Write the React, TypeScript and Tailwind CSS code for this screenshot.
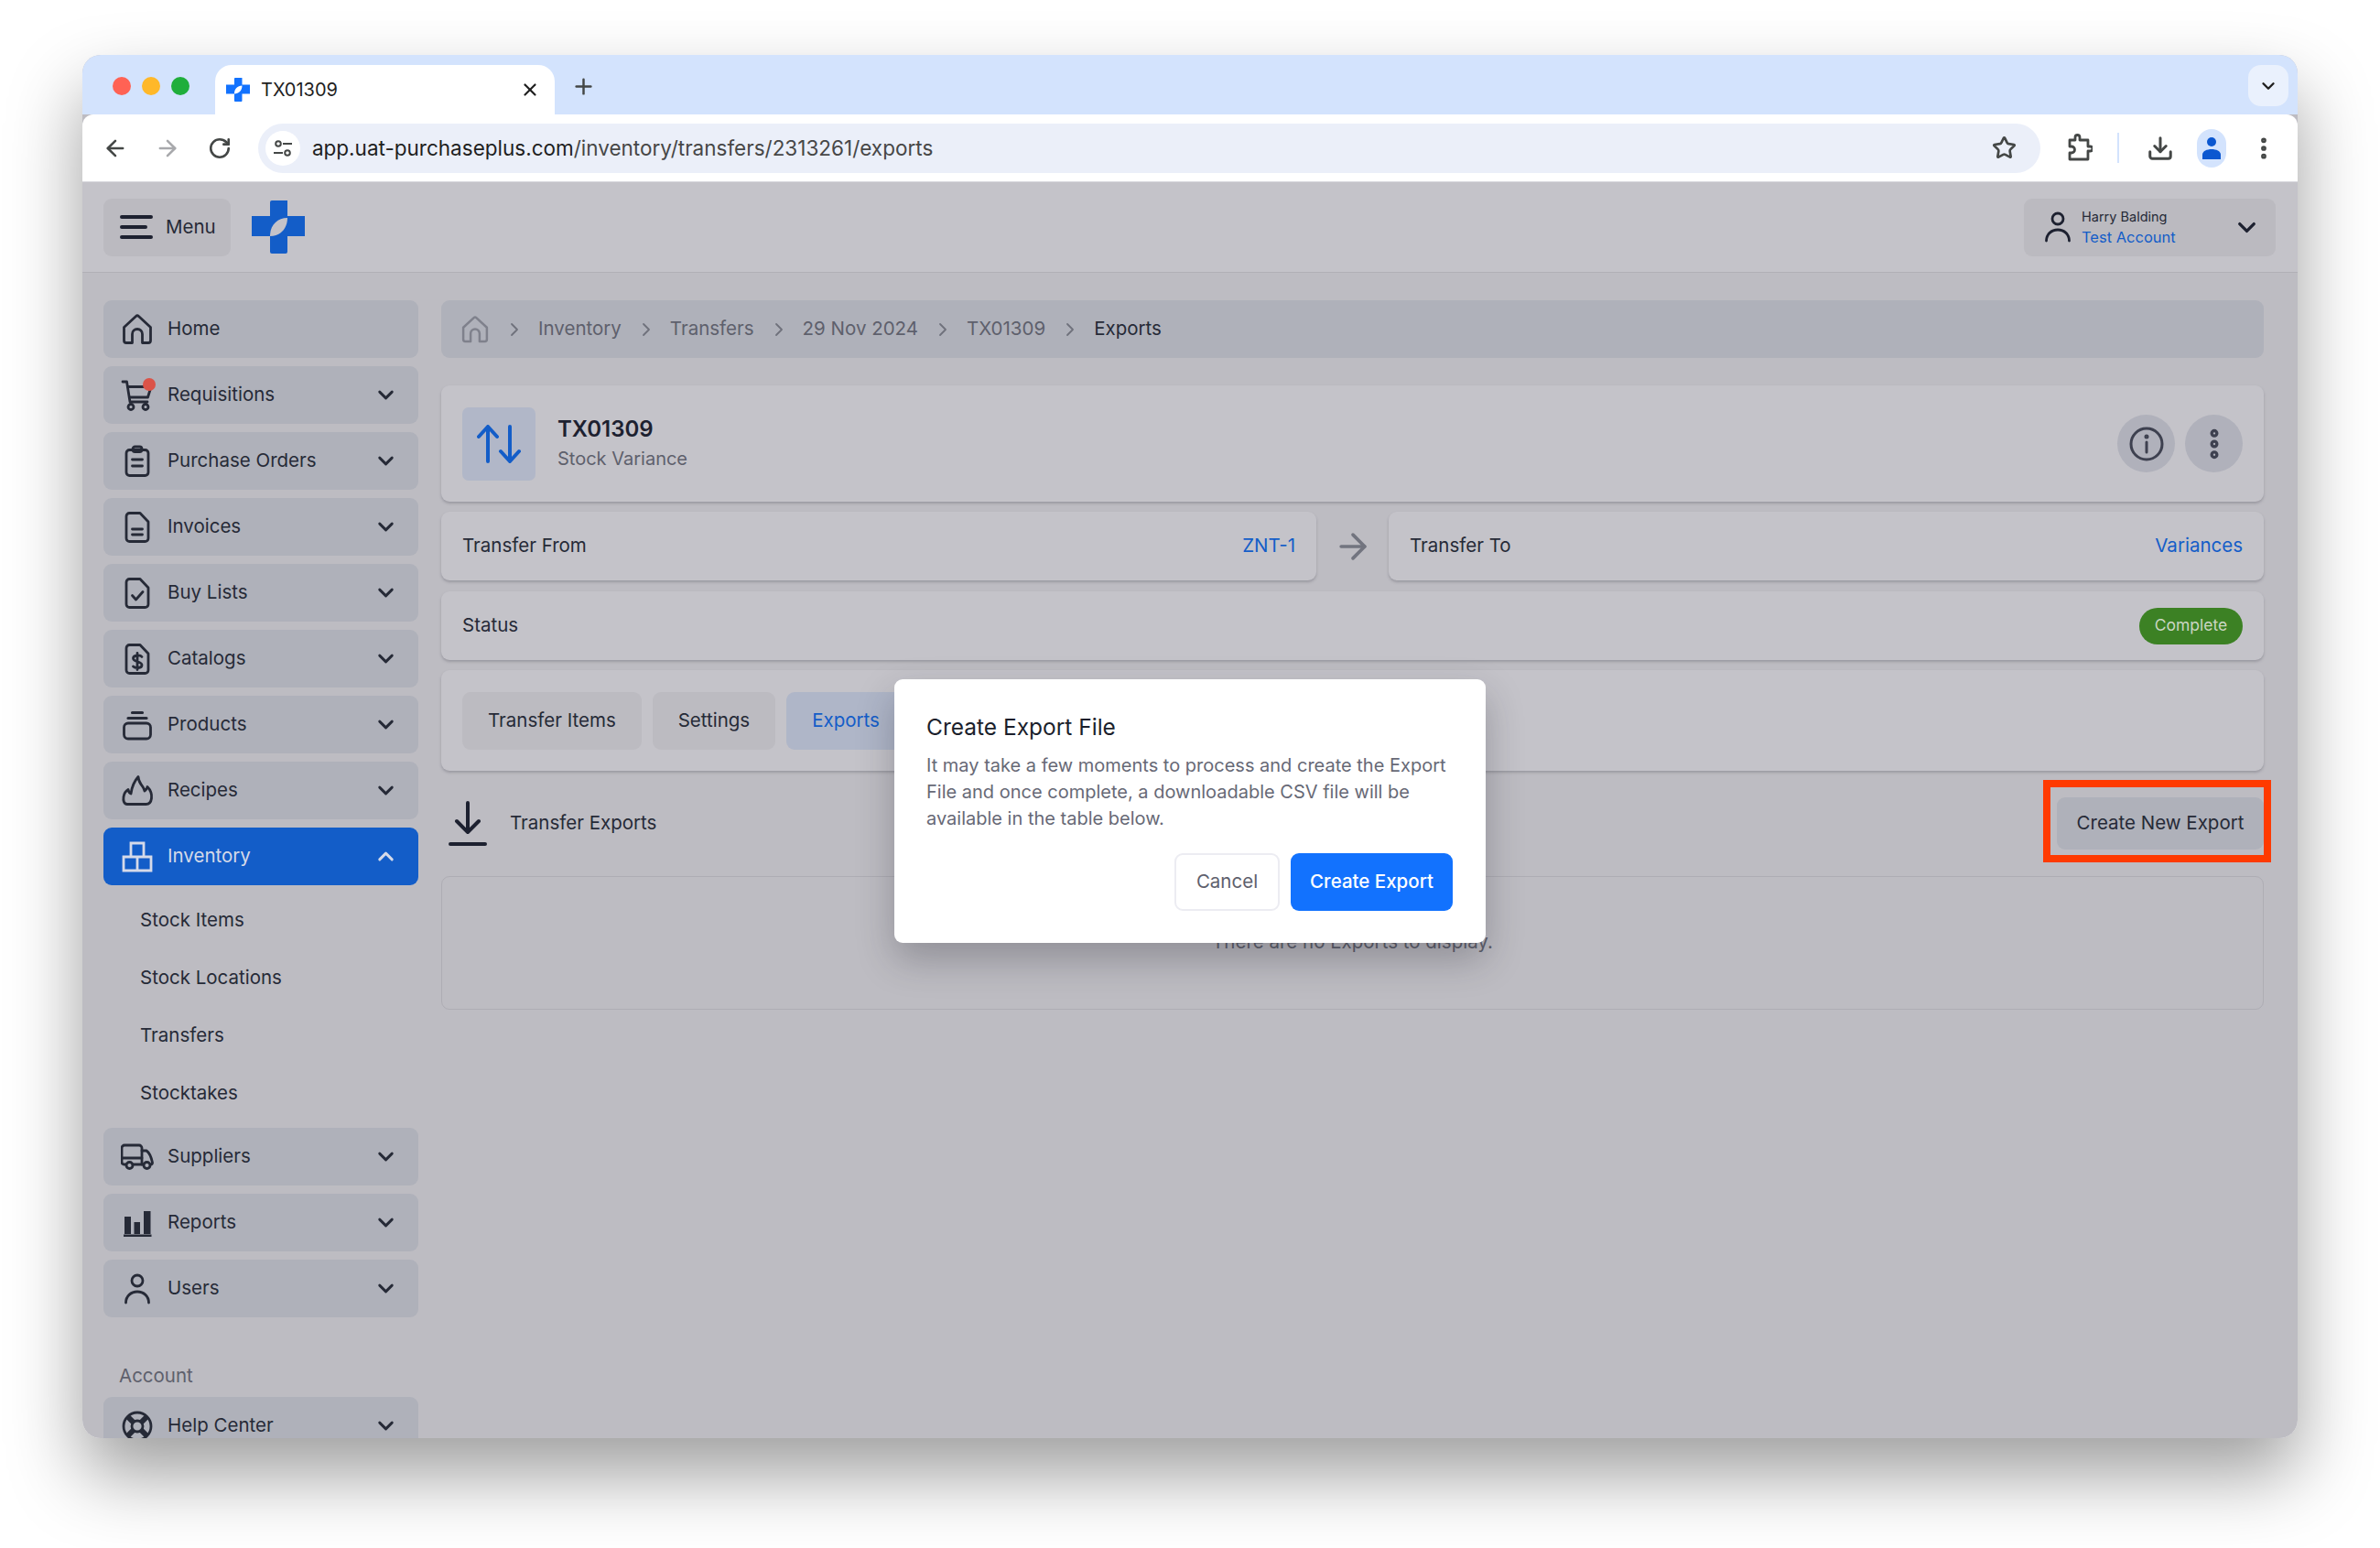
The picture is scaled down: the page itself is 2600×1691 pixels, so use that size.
import React from 'react';
import { ArrowLeft, ArrowRight, ChevronDown, ChevronRight, ChevronUp, Download, EllipsisVertical, Plus, RotateCw, Star, X } from 'lucide-react';

type IconProps = { className?: string };

const Svg: React.FC<{ className?: string; children: React.ReactNode }> = ({ className, children }) => (
  <svg viewBox="0 0 36 36" fill="none" stroke="currentColor" strokeWidth="2.8" strokeLinecap="round" strokeLinejoin="round" className={className ?? 'h-9 w-9'}>
    {children}
  </svg>
);

const Logo: React.FC<{ className?: string }> = ({ className }) => (
  <svg viewBox="0 0 58 58" fill="currentColor" className={className}>
    <path fillRule="evenodd" d="M22 0H39V17H58V39H39V56a2 2 0 0 1-2 2H22a2 2 0 0 1-2-2V39H0V17H20V2a2 2 0 0 1 2-2ZM39 19C28 19 20 27 20 39C31 39 39 31 39 19Z" />
  </svg>
);

const HomeIcon = ({ className }: IconProps) => (
  <Svg className={className}>
    <path d="M3.5 15.5 16.5 3.5a2.2 2.2 0 0 1 3 0L32.5 15.5V30a2.5 2.5 0 0 1-2.5 2.5H23.5V23a5.5 5.5 0 0 0-11 0V32.5H6A2.5 2.5 0 0 1 3.5 30Z" />
  </Svg>
);
const CartIcon = ({ className }: IconProps) => (
  <Svg className={className}>
    <path d="M2 3H6.5L10 25H29" />
    <path d="M7.5 8.5H33L29.5 20H9.5" />
    <circle cx="11" cy="30.5" r="3" />
    <circle cx="27" cy="30.5" r="3" />
  </Svg>
);
const ClipboardIcon = ({ className }: IconProps) => (
  <Svg className={className}>
    <rect x="6" y="5.5" width="24" height="28" rx="3.5" />
    <rect x="13" y="2" width="10" height="5.5" rx="2.5" />
    <path d="M12.5 16H23.5M12.5 23H23.5" />
  </Svg>
);
const docPath = 'M9.5 2.5H21L30 12V30a3.5 3.5 0 0 1-3.5 3.5H9.5A3.5 3.5 0 0 1 6 30V6a3.5 3.5 0 0 1 3.5-3.5Z';
const InvoiceIcon = ({ className }: IconProps) => (
  <Svg className={className}>
    <path d={docPath} />
    <path d="M12.5 20H23.5M12.5 26H23.5" />
  </Svg>
);
const BuyListIcon = ({ className }: IconProps) => (
  <Svg className={className}>
    <path d={docPath} />
    <path d="M12.5 20.5 16.5 25 24 16.5" />
  </Svg>
);
const CatalogIcon = ({ className }: IconProps) => (
  <Svg className={className}>
    <path d={docPath} />
    <path d="M23 15.5C21.5 13.5 14 13 13.5 17c-.5 4.5 9.5 3 9.5 7.5 0 4-7.5 3.5-9.5 1.5M18 11.5V29.5" />
  </Svg>
);
const ProductsIcon = ({ className }: IconProps) => (
  <Svg className={className}>
    <rect x="3.5" y="16" width="29" height="17" rx="4.5" />
    <path d="M8 10.5H28M12.5 4.5H23.5" strokeWidth="3.2" />
  </Svg>
);
const FlameIcon = ({ className }: IconProps) => (
  <Svg className={className}>
    <path d="M7 32.5C3 32.5 2.5 28 3 24.5 3.5 21 5.5 18 8 16.5c.5 2.5 1.5 4 3 4.5C12 14 14.5 7.5 19 2.5c.5 5.500 3 8.500 5 11 1 1.500 1.500 3 2 4.500 1.500-1 2.500-2.500 3-4.500 3.500 3.500 5 8 4.500 12.500-.5 4-2.500 6.500-6 6.500Z" />
  </Svg>
);
const BoxesIcon = ({ className }: IconProps) => (
  <Svg className={className}>
    <path d="M11 3H25V18H11ZM3 18H18V33H3ZM18 18H33V33H18Z" strokeLinejoin="miter" />
  </Svg>
);
const TruckIcon = ({ className }: IconProps) => (
  <Svg className={className}>
    <path d="M5.500 26H3.500A2.500 2.500 0 0 1 1 23.500V8a3 3 0 0 1 3-3H20a3 3 0 0 1 3 3V26H13" />
    <path d="M23 11H28C31 13 33 17 34.500 24 34.500 25.500 33.500 26 32.500 26M23 26H24.500M1 19H23" />
    <circle cx="9.500" cy="27" r="3.500" />
    <circle cx="28.500" cy="27" r="3.500" />
  </Svg>
);
const BarsIcon = ({ className }: IconProps) => (
  <svg viewBox="0 0 36 36" fill="currentColor" className={className}>
    <path d="M4 11H11V30H4ZM14.500 17H21V30H14.500ZM25 5H32.500V30H25ZM3 30.500H33.500V33H3Z" />
  </svg>
);
const UserIcon = ({ className }: IconProps) => (
  <Svg className={className}>
    <circle cx="18" cy="9" r="6" />
    <path d="M5.500 33C5.500 26 11 21 18 21S30.500 26 30.500 33" />
  </Svg>
);
const HelpIcon = ({ className }: IconProps) => (
  <Svg className={className}>
    <circle cx="18" cy="18" r="15" />
    <circle cx="18" cy="18" r="6" />
    <path d="M8 8 13.500 13.500M28 8 22.500 13.500M8 28 13.500 22.500M28 28 22.500 22.500" strokeWidth="6" strokeLinecap="butt" />
  </Svg>
);

const navTop = [
  { label: 'Requisitions', icon: CartIcon, dot: true },
  { label: 'Purchase Orders', icon: ClipboardIcon },
  { label: 'Invoices', icon: InvoiceIcon },
  { label: 'Buy Lists', icon: BuyListIcon },
  { label: 'Catalogs', icon: CatalogIcon },
  { label: 'Products', icon: ProductsIcon },
  { label: 'Recipes', icon: FlameIcon },
];
const navBottom = [
  { label: 'Suppliers', icon: TruckIcon },
  { label: 'Reports', icon: BarsIcon },
  { label: 'Users', icon: UserIcon },
];
const subItems = ['Stock Items', 'Stock Locations', 'Transfers', 'Stocktakes'];
const crumbs = ['Inventory', 'Transfers', '29 Nov 2024', 'TX01309'];

const NavItem: React.FC<{ label: string; icon: React.FC<IconProps>; dot?: boolean; chevron?: boolean }> = ({ label, icon: Icon, dot, chevron = true }) => (
  <div className="flex h-[63px] shrink-0 items-center rounded-[9px] bg-[#AFB1BA] pl-[19px] pr-[22px] text-[#262A37]">
    <div className="relative mr-[15px] flex h-9 w-9 items-center justify-center">
      <Icon className="h-9 w-9" />
      {dot && <span className="absolute right-[-2px] top-[-1px] h-[14px] w-[14px] rounded-full bg-[#DB5348]" />}
    </div>
    <span className="flex-1 text-[20.5px]">{label}</span>
    {chevron && <ChevronDown className="h-[27px] w-[27px]" strokeWidth={2.6} />}
  </div>
);

const Sidebar: React.FC = () => (
  <aside className="flex w-[344px] shrink-0 flex-col gap-[9px]">
    <NavItem label="Home" icon={HomeIcon} chevron={false} />
    {navTop.map((item) => (
      <NavItem key={item.label} {...item} />
    ))}
    <div className="flex h-[63px] shrink-0 items-center rounded-[9px] bg-[#135DC8] pl-[19px] pr-[22px] text-[#D5DAE9]">
      <BoxesIcon className="mr-[15px] h-9 w-9" />
      <span className="flex-1 text-[20.5px]">Inventory</span>
      <ChevronUp className="h-[27px] w-[27px]" strokeWidth={2.6} />
    </div>
    <div className="-mb-[3px] -mt-[2px] flex flex-col">
      {subItems.map((label) => (
        <div key={label} className="flex h-[63px] items-center pl-10 text-[20.5px] text-[#262A37]">
          {label}
        </div>
      ))}
    </div>
    {navBottom.map((item) => (
      <NavItem key={item.label} {...item} />
    ))}
    <div className="mt-[41px] pl-[17px] text-[20.5px] leading-[28px] text-[#5E606C]">Account</div>
    <NavItem label="Help Center" icon={HelpIcon} />
  </aside>
);

const ExportModal: React.FC = () => (
  <div className="absolute left-[887px] top-[682px] w-[646px] rounded-[9px] bg-white px-[35px] pb-[35px] pt-[33px] shadow-[0_18px_40px_rgba(30,30,40,0.28)]">
    <h2 className="text-[24.5px] leading-[38px] text-[#1B1F2C]">Create Export File</h2>
    <p className="mt-[9px] text-[20px] leading-[29px] text-[#676976]">
      It may take a few moments to process and create the Export File and once complete, a downloadable CSV file will be available in the table below.
    </p>
    <div className="mt-[23px] flex justify-end gap-[12px] pr-[1px]">
      <button className="h-[63px] w-[115px] rounded-[9px] border-2 border-[#ECECF2] bg-white text-[20.5px] text-[#5E606C]">Cancel</button>
      <button className="h-[63px] w-[177px] rounded-[9px] bg-[#1272FE] text-[20.5px] font-medium text-white">Create Export</button>
    </div>
  </div>
);

const Card: React.FC<{ className: string; children: React.ReactNode }> = ({ className, children }) => (
  <div className={`rounded-[9px] bg-[#C4C3C9] shadow-[0_2px_3px_rgba(90,90,100,0.35)] ${className}`}>{children}</div>
);

const Main: React.FC = () => (
  <main className="flex min-w-0 flex-1 flex-col pl-[25px] pr-[37px] text-[20.5px] text-[#262A37]">
    <div className="flex h-[63px] shrink-0 items-center rounded-[9px] bg-[#AFB1BA] pl-[21px] text-[#5E606C]">
      <HomeIcon className="mr-[15px] h-[32px] w-[32px] text-[#7F818C]" />
      {crumbs.map((crumb) => (
        <React.Fragment key={crumb}>
          <ChevronRight className="mr-[14px] h-6 w-6 text-[#6F717C]" strokeWidth={1.8} />
          <span className="mr-[15px]">{crumb}</span>
        </React.Fragment>
      ))}
      <ChevronRight className="mr-[14px] h-6 w-6 text-[#6F717C]" strokeWidth={1.8} />
      <span className="text-[#262A37]">Exports</span>
    </div>

    <Card className="mt-[30px] flex h-[127px] shrink-0 items-center px-[23px]">
      <div className="flex h-20 w-20 items-center justify-center rounded-[7px] bg-[#B1B7C8] text-[#135DC8]">
        <svg viewBox="0 0 50 42" fill="none" stroke="currentColor" strokeWidth="4" strokeLinecap="round" strokeLinejoin="round" className="h-[42px] w-[50px]">
          <path d="M13 40V3M3 13 13 2 23 13M37 2V39M27 29 37 40 47 29" />
        </svg>
      </div>
      <div className="ml-[24px] flex-1">
        <div className="text-[24px] font-semibold leading-[32px] text-[#1D2130]">TX01309</div>
        <div className="text-[20px] leading-[32px] text-[#5E606C]">Stock Variance</div>
      </div>
      <div className="flex gap-[11px]">
        <div className="flex h-[63px] w-[63px] items-center justify-center rounded-full bg-[#B0B1BB] text-[#3E4150]">
          <svg viewBox="0 0 38 38" fill="none" stroke="currentColor" strokeWidth="3" strokeLinecap="round" className="h-[38px] w-[38px]">
            <circle cx="19" cy="19" r="17" />
            <path d="M19 17V28" />
            <circle cx="19" cy="11" r="1" fill="currentColor" />
          </svg>
        </div>
        <div className="flex h-[63px] w-[63px] items-center justify-center rounded-full bg-[#B0B1BB] text-[#3E4150]">
          <EllipsisVertical className="h-10 w-10" strokeWidth={3.4} />
        </div>
      </div>
    </Card>

    <div className="mt-[11px] flex h-[75px] shrink-0 items-stretch">
      <Card className="flex w-[956px] items-center justify-between px-[23px]">
        <span>Transfer From</span>
        <span className="text-[#135DC8]">ZNT-1</span>
      </Card>
      <div className="flex w-[79px] items-center justify-center text-[#72747F]">
        <ArrowRight className="h-[44px] w-[44px]" strokeWidth={2} />
      </div>
      <Card className="flex flex-1 items-center justify-between px-[23px]">
        <span>Transfer To</span>
        <span className="text-[#135DC8]">Variances</span>
      </Card>
    </div>

    <Card className="mt-[12px] flex h-[75px] shrink-0 items-center justify-between px-[23px]">
      <span>Status</span>
      <span className="flex h-10 w-[113px] items-center justify-center rounded-full bg-[#3C8124] text-[17.5px] text-[#CBD6C3]">Complete</span>
    </Card>

    <Card className="mt-[11px] flex h-[110px] shrink-0 items-center gap-[12px] px-[23px]">
      <div className="flex h-[63px] items-center rounded-[9px] bg-[#BCBBC1] px-[28px]">Transfer Items</div>
      <div className="flex h-[63px] items-center rounded-[9px] bg-[#BCBBC1] px-[28px]">Settings</div>
      <div className="flex h-[63px] items-center rounded-[9px] bg-[#AFB6C8] px-[28px] text-[#135DC8]">Exports</div>
    </Card>

    <div className="relative mt-[29px] flex h-[57px] shrink-0 items-center justify-between">
      <div className="flex items-center">
        <svg viewBox="0 0 42 50" fill="none" stroke="currentColor" strokeWidth="4" strokeLinecap="round" strokeLinejoin="round" className="ml-[8px] h-[50px] w-[42px] text-[#1D2130]">
          <path d="M21 2V33M9 22 21 34 33 22M2 47H40" />
        </svg>
        <span className="ml-[25px]">Transfer Exports</span>
      </div>
      <button className="flex h-[57px] w-[226px] items-center justify-center rounded-[9px] bg-[#AFB1BA] text-[#262A37]">Create New Export</button>
      <div className="absolute bottom-[-14px] right-[-8px] top-[-19px] w-[249px] border-[8px] border-[#FF3A00]" />
    </div>

    <div className="mt-[29px] flex h-[146px] shrink-0 items-center justify-center rounded-[9px] border border-[#AEADB4] pb-[2px] text-[#5E606C]">
      There are no Exports to display.
    </div>
  </main>
);

const BrowserChrome: React.FC = () => (
  <>
    <div className="relative flex h-[65px] shrink-0 bg-[#D3E3FD]">
      <div className="ml-[33px] mt-[24px] flex gap-[12px]">
        <span className="h-5 w-5 rounded-full bg-[#FF6254]" />
        <span className="h-5 w-5 rounded-full bg-[#FFB829]" />
        <span className="h-5 w-5 rounded-full bg-[#1FAE3B]" />
      </div>
      <div className="ml-[28px] mt-[11px] flex h-[54px] w-[371px] items-center rounded-t-[18px] bg-white pl-[12px] pr-[16px]">
        <Logo className="h-[26px] w-[26px] text-[#1272FE]" />
        <span className="ml-[12px] flex-1 text-[20px] text-[#1F1F1F]">TX01309</span>
        <X className="h-[22px] w-[22px] text-[#1F1F1F]" strokeWidth={2.4} />
      </div>
      <Plus className="ml-[18px] mt-[21px] h-[27px] w-[27px] text-[#444746]" strokeWidth={2.2} />
      <div className="absolute right-[10px] top-[11px] flex h-[45px] w-[44px] items-center justify-center rounded-[14px] bg-[#EAF1FD]">
        <ChevronDown className="h-[22px] w-[22px] text-[#1F1F1F]" strokeWidth={2.6} />
      </div>
    </div>
    <div className="flex h-[74px] shrink-0 items-center rounded-t-[12px] border-b border-[#D9D9DE] bg-white pl-[22px] pr-[22px] text-[#444746]">
      <ArrowLeft className="h-[28px] w-[28px]" strokeWidth={2.2} />
      <ArrowRight className="ml-[29px] h-[28px] w-[28px] text-[#A8A9AC]" strokeWidth={2.2} />
      <RotateCw className="ml-[30px] h-[26px] w-[26px]" strokeWidth={2.4} />
      <div className="ml-[29px] flex h-[54px] w-[1949px] items-center rounded-full bg-[#EBEFF9] pl-[8px] pr-[26px]">
        <div className="flex h-[38px] w-[38px] items-center justify-center rounded-full bg-white">
          <svg viewBox="0 0 22 22" fill="none" stroke="#444746" strokeWidth="2" className="h-[22px] w-[22px]">
            <circle cx="6" cy="6" r="2.800" />
            <path d="M11 6H21M1 16H11" />
            <circle cx="16" cy="16" r="2.800" />
          </svg>
        </div>
        <div className="ml-[13px] flex-1 text-[22.5px] text-[#1F1F1F]">
          app.uat-purchaseplus.com<span className="text-[#474747]">/inventory/transfers/2313261/exports</span>
        </div>
        <Star className="h-[27px] w-[27px]" strokeWidth={2.4} />
      </div>
      <svg viewBox="0 0 28 32" fill="none" stroke="currentColor" strokeWidth="2.800" strokeLinejoin="round" className="ml-[29px] h-[32px] w-[28px]">
        <path d="M3 7H9V4a2.500 2.500 0 0 1 5 0V7H23V14h2.500a2.500 2.500 0 0 1 0 5H23V28H3V21h2a3.500 3.500 0 0 0 0-7H3Z" />
      </svg>
      <div className="ml-[27px] h-[33px] w-[2px] bg-[#D3E3FD]" />
      <Download className="ml-[30px] h-[30px] w-[30px]" strokeWidth={2.400} />
      <div className="ml-[25px] flex h-[42px] w-[32px] items-center justify-center rounded-full bg-[#D3E3FD]">
        <svg viewBox="0 0 22 28" fill="#0B57D0" className="h-[28px] w-[22px]">
          <circle cx="11" cy="7" r="5" />
          <path d="M1 26V21C1 17 6 15 11 15S21 17 21 21V26Z" />
        </svg>
      </div>
      <EllipsisVertical className="ml-[26px] h-[30px] w-[30px]" strokeWidth={2.600} />
    </div>
  </>
);

const App: React.FC = () => (
  <div className="h-[1691px] w-[2600px] overflow-hidden bg-white pl-[90px] pt-[60px] font-['Inter',sans-serif]">
    <div className="rounded-[20px] shadow-[0_40px_80px_rgba(0,0,0,0.38)] w-[2420px]">
      <div className="relative flex h-[1511px] w-[2420px] flex-col overflow-hidden rounded-[20px] bg-[#BDBCC2]">
        <BrowserChrome />
        <header className="flex h-[99px] shrink-0 items-center justify-between border-b border-[#B0AFB6] bg-[#C4C3C9] pl-[23px] pr-[24px]">
          <div className="flex items-center">
            <div className="flex h-[63px] w-[139px] items-center rounded-[9px] bg-[#BBBAC0] pl-[18px] text-[20.500px] text-[#262A37]">
              <svg viewBox="0 0 36 28" fill="none" stroke="#1D2130" strokeWidth="4" strokeLinecap="round" className="mr-[14px] h-[28px] w-[36px]">
                <path d="M2 3H34M2 14H28M2 25H34" />
              </svg>
              Menu
            </div>
            <Logo className="ml-[23px] h-[58px] w-[58px] text-[#135DC8]" />
          </div>
          <div className="flex h-[63px] w-[275px] items-center rounded-[9px] bg-[#BBBAC0] pl-[19px] pr-[16px]">
            <UserIcon className="h-9 w-9 text-[#1D2130]" />
            <div className="ml-[8px] flex-1">
              <div className="text-[14.500px] leading-[22px] text-[#262A37]">Harry Balding</div>
              <div className="text-[16.500px] leading-[22px] text-[#135DC8]">Test Account</div>
            </div>
            <ChevronDown className="h-[31px] w-[31px] text-[#1D2130]" strokeWidth={2.600} />
          </div>
        </header>
        <div className="flex min-h-0 flex-1 overflow-hidden pl-[23px] pt-[30px]">
          <Sidebar />
          <Main />
        </div>
        <ExportModal />
      </div>
    </div>
  </div>
);

export default App;
